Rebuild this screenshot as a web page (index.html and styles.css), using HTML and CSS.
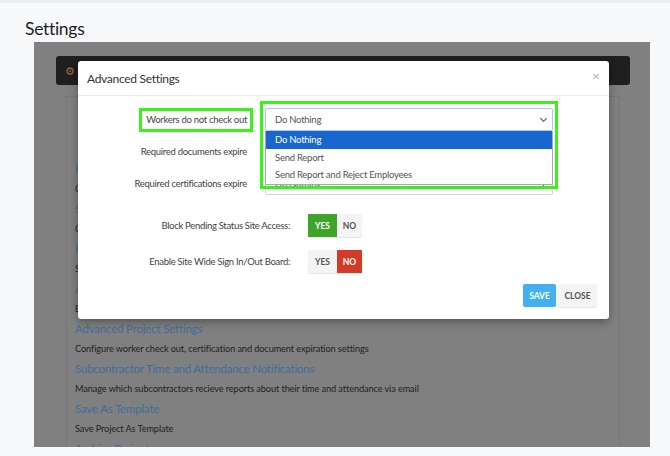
FILE: index.html
```html
<!DOCTYPE html>
<html lang="en">
<head>
    <meta charset="UTF-8">
    <meta name="viewport" content="width=device-width, initial-scale=1.0">
    <title>Settings</title>
    <link rel="stylesheet" href="styles.css">
</head>
<body>
    <h1 class="page-title">Settings</h1>
    <div class="backdrop">
        <div class="navbar"><span class="gear">&#9881;</span></div>
        <div class="card">
            <div class="item"><a>Project Details</a><p>Change the project name, address and schedule</p></div>
            <div class="item"><a>Sites</a><p>Create and manage sites for this project</p></div>
            <div class="item"><a>Roles</a><p>Set which roles workers can hold on this project</p></div>
            <div class="item"><a>Access Levels</a><p>Edit site access levels and permissions</p></div>
            <div class="item"><a>Advanced Project Settings</a><p>Configure worker check out, certification and document expiration settings</p></div>
            <div class="item"><a>Subcontractor Time and Attendance Notifications</a><p>Manage which subcontractors recieve reports about their time and attendance via email</p></div>
            <div class="item"><a>Save As Template</a><p>Save Project As Template</p></div>
            <div class="item"><a>Archive Project</a><p>Close this project</p></div>
        </div>
    </div>

    <div class="modal">
        <div class="modal-header">
            <span class="modal-title">Advanced Settings</span>
            <span class="modal-close">&times;</span>
        </div>
        <div class="modal-body">
            <div class="form-grid">
                <label class="field-label">Workers do not check out</label>
                <div class="select focused"><span>Do Nothing</span><span class="chevron"></span></div>
                <label class="field-label">Required documents expire</label>
                <div class="select"><span>Do Nothing</span><span class="chevron"></span></div>
                <label class="field-label">Required certifications expire</label>
                <div class="select"><span>Do Nothing</span><span class="chevron"></span></div>
            </div>
            <div class="toggle-grid">
                <label class="field-label">Block Pending Status Site Access:</label>
                <div class="toggle"><span class="on-yes">YES</span><span>NO</span></div>
                <label class="field-label">Enable Site Wide Sign In/Out Board:</label>
                <div class="toggle"><span>YES</span><span class="on-no">NO</span></div>
            </div>
        </div>
        <div class="modal-footer">
            <button class="btn btn-save">SAVE</button>
            <button class="btn btn-close">CLOSE</button>
        </div>

        <ul class="dropdown">
            <li class="selected">Do Nothing</li>
            <li>Send Report</li>
            <li>Send Report and Reject Employees</li>
        </ul>
        <div class="highlight hl-label"></div>
        <div class="highlight hl-select"></div>
    </div>
</body>
</html>
```

FILE: styles.css
```css
body {
    margin: 0;
    font-family: Lato, 'Noto Sans', sans-serif;
    background-color: #f7f9fb;
    border-top: 3px solid #eceef1;
    color: #333;
    height: 453px;
    overflow: hidden;
}
.page-title {
    margin: 0;
    padding: 15px 0 0 25px;
    height: 24px;
    font-size: 17.5px;
    font-weight: 400;
    letter-spacing: -0.3px;
    color: #222;
}
.backdrop {
    margin-left: 34px;
    width: 616px;
    height: 405px;
    background-color: #808080;
    overflow: hidden;
    padding-top: 14px;
    box-sizing: border-box;
}
.navbar {
    margin: 0 20px 0 22px;
    height: 29px;
    background-color: #1f1f1f;
    border-radius: 3px;
    display: flex;
    align-items: center;
    padding-left: 9px;
}
.gear {
    color: #94703a;
    font-size: 11px;
}
.card {
    margin: 11px 30px 0 32px;
    border: 1px solid #777;
    border-bottom: none;
    padding: 62px 0 0 8px;
    height: 400px;
}
.item a {
    display: block;
    color: #3d6e9f;
    font-size: 11.5px;
    letter-spacing: -0.2px;
    line-height: 20px;
}
.item p {
    margin: 0;
    color: #222;
    font-size: 9.2px;
    letter-spacing: -0.1px;
    line-height: 20px;
}

.modal {
    position: absolute;
    left: 78px;
    top: 61px;
    width: 531px;
    height: 258px;
    background-color: #fff;
    border-radius: 3px;
    box-shadow: 0 3px 8px rgba(0, 0, 0, 0.35);
    display: flex;
    flex-direction: column;
}
.modal-header {
    height: 34px;
    border-bottom: 1px solid #eaeaea;
    display: flex;
    align-items: center;
    justify-content: space-between;
    padding: 0 9px;
}
.modal-title {
    font-size: 12px;
    letter-spacing: -0.3px;
    color: #333;
}
.modal-close {
    font-size: 14px;
    color: #b0b0b0;
    margin-top: -6px;
}
.modal-body {
    flex: 1;
    padding-top: 12px;
}
.form-grid {
    display: grid;
    grid-template-columns: 169px 288px;
    column-gap: 18px;
    row-gap: 9px;
    align-items: center;
}
.field-label {
    text-align: right;
    font-size: 9.5px;
    letter-spacing: -0.3px;
    color: #3f3f3f;
}
.select {
    height: 23px;
    border: 1px solid #d5d5d5;
    border-radius: 2px;
    box-sizing: border-box;
    display: flex;
    align-items: center;
    justify-content: space-between;
    padding: 0 6px 0 9px;
    font-size: 9.5px;
    letter-spacing: -0.25px;
    color: #555;
}
.select.focused {
    border-color: #a9c9ea;
}
.chevron {
    width: 4px;
    height: 4px;
    border-right: 1px solid #555;
    border-bottom: 1px solid #555;
    transform: rotate(45deg);
    margin-top: -3px;
}
.toggle-grid {
    display: grid;
    grid-template-columns: 212px auto;
    column-gap: 18px;
    row-gap: 13px;
    align-items: center;
    margin-top: 19px;
}
.toggle {
    display: flex;
    width: 54px;
    height: 23px;
    border-radius: 2px;
    box-shadow: 0 1px 1px rgba(0, 0, 0, 0.12);
}
.toggle span {
    flex: 1;
    display: flex;
    align-items: center;
    justify-content: center;
    background-color: #f4f4f4;
    color: #555;
    font-size: 8.5px;
    font-weight: 700;
}
.toggle span:first-child {
    flex: 0 0 29px;
}
.toggle .on-yes {
    background-color: #3ea42b;
    color: #fff;
}
.toggle .on-no {
    background-color: #d33b28;
    color: #fff;
}
.modal-footer {
    display: flex;
    justify-content: flex-end;
    gap: 2px;
    padding: 0 12px 12px 0;
}
.btn {
    height: 23px;
    border: none;
    border-radius: 2px;
    font-family: inherit;
    font-size: 8.5px;
    font-weight: 700;
    padding: 0;
}
.btn-save {
    width: 33px;
    background-color: #42b0f2;
    color: #fff;
}
.btn-close {
    width: 39px;
    background-color: #f4f4f4;
    color: #555;
    box-shadow: 0 1px 1px rgba(0, 0, 0, 0.1);
}

.dropdown {
    position: absolute;
    left: 187px;
    top: 70px;
    width: 288px;
    margin: 0;
    padding: 0;
    list-style: none;
    background-color: #fff;
    border: 1px solid #aaa;
    border-top: none;
    box-sizing: border-box;
}
.dropdown li {
    height: 17.5px;
    line-height: 17.5px;
    padding-left: 9px;
    font-size: 9.5px;
    letter-spacing: -0.25px;
    color: #555;
}
.dropdown li.selected {
    background-color: #1a66d1;
    color: #fff;
}
.highlight {
    position: absolute;
    border: 3px solid #38f21a;
    box-sizing: border-box;
}
.hl-label {
    left: 61px;
    top: 47px;
    width: 114px;
    height: 24px;
}
.hl-select {
    left: 182px;
    top: 40px;
    width: 298px;
    height: 88px;
}
```
